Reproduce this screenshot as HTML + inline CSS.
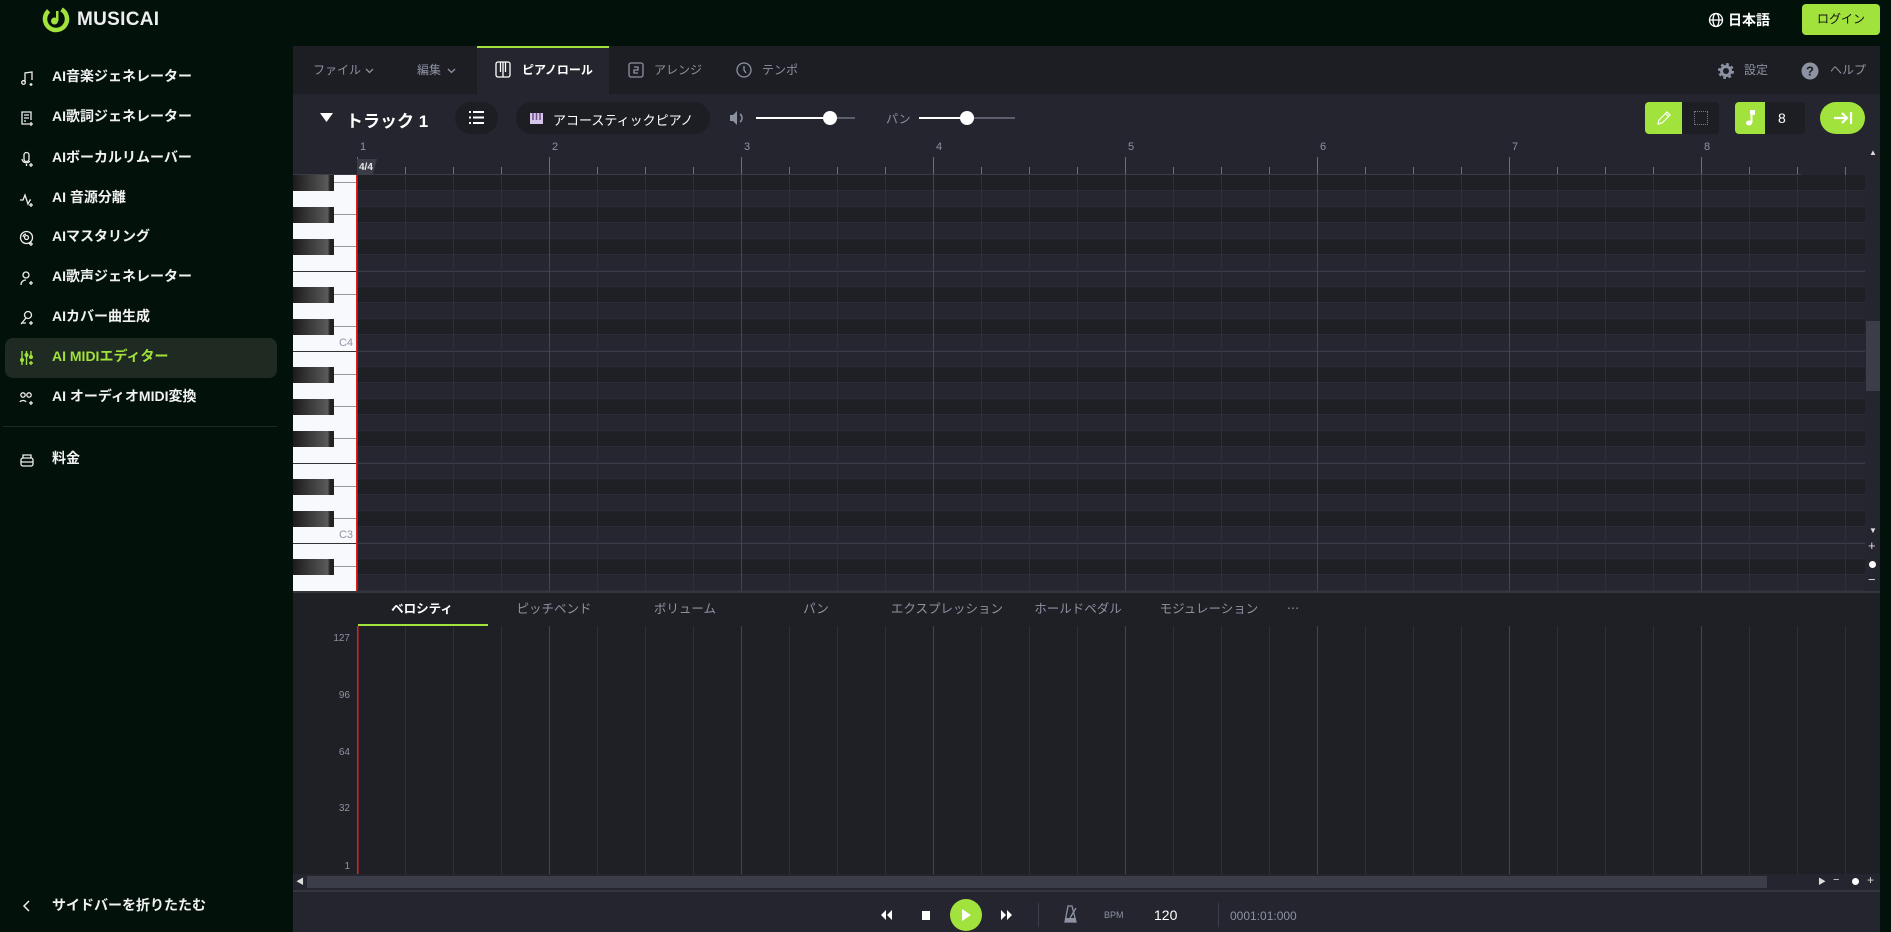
<!DOCTYPE html>
<html><head><meta charset="utf-8">
<style>
*{margin:0;padding:0;box-sizing:border-box}
body{width:1891px;height:932px;background:#03110b;font-family:"Liberation Sans","Noto Sans CJK JP",sans-serif;position:relative;overflow:hidden;color:#fff}
.a{position:absolute}
.side{font-size:14px;font-weight:bold;color:#f2f2f2}
.side div.t{position:absolute;left:52px;transform:translateY(-50%);white-space:nowrap}
.ic{position:absolute;left:19px;width:16px;height:16px;transform:translateY(-50%)}
.tab{position:absolute;top:46px;height:48px;line-height:48px;font-size:12px;color:#8d92a3}
.lt{position:absolute;top:593px;width:130px;text-align:center;font-size:12.5px;color:#8d92a3;line-height:32px}
.vl{position:absolute;right:1541px;font-size:10px;color:#8d92a3}
.rn{position:absolute;top:141px;font-size:11px;color:#8d92a3}
</style></head><body>
<!-- header -->
<svg class="a" style="left:42px;top:5px" width="28" height="28" viewBox="0 0 28 28"><circle cx="14" cy="14" r="11" fill="none" stroke="#a2e23c" stroke-width="4.5" stroke-dasharray="55 14" transform="rotate(-60 14 14)"/><circle cx="12.5" cy="16" r="3.5" fill="#a2e23c"/><rect x="14" y="6" width="2.5" height="10" fill="#a2e23c"/></svg>
<div class="a" style="left:77px;top:9px;font-size:19px;font-weight:bold;color:#eee;letter-spacing:0.3px">MUSICAI</div>
<svg class="a" style="left:1708px;top:12px" width="16" height="16" viewBox="0 0 16 16" fill="none" stroke="#fff" stroke-width="1.3"><circle cx="8" cy="8" r="6.5"/><ellipse cx="8" cy="8" rx="3" ry="6.5"/><path d="M1.5 8h13"/></svg>
<div class="a" style="left:1728px;top:10px;font-size:14px;font-weight:bold">日本語</div>
<div class="a" style="left:1802px;top:4px;width:78px;height:31px;background:#a2e23c;border-radius:4px;color:#111;font-size:12px;text-align:center;line-height:31px">ログイン</div>

<!-- sidebar -->
<div class="a" style="left:5px;top:338px;width:272px;height:40px;background:#1f2a23;border-radius:8px"></div>
<div class="a" style="left:3px;top:426px;width:274px;height:1px;background:#1e2a23"></div>
<div class="side">
<svg class="ic" style="top:78px" viewBox="0 0 16 16" fill="none" stroke="#eee" stroke-width="1.3"><path d="M6 12V3l7-1v8"/><circle cx="4.5" cy="12.5" r="1.8"/><path d="M12 13v3M10.5 14.5h3"/></svg><div class="t" style="top:76px">AI音楽ジェネレーター</div>
<svg class="ic" style="top:118px" viewBox="0 0 16 16" fill="none" stroke="#eee" stroke-width="1.3"><path d="M10 14H3V2h9v8M5 5h5M5 8h5M5 11h2"/><path d="M12 12v4M10 14h4"/></svg><div class="t" style="top:116px">AI歌詞ジェネレーター</div>
<svg class="ic" style="top:159px" viewBox="0 0 16 16" fill="none" stroke="#eee" stroke-width="1.3"><rect x="5" y="1.5" width="5" height="9" rx="2.5"/><path d="M3 8a4.5 4.5 0 0 0 8 2M7.5 13v2"/><path d="M12 12v4M10 14h4"/></svg><div class="t" style="top:157px">AIボーカルリムーバー</div>
<svg class="ic" style="top:199px" viewBox="0 0 16 16" fill="none" stroke="#eee" stroke-width="1.3"><path d="M1 9h3l2-5 3 9 2-4h1"/><path d="M12 12v4M10 14h4"/></svg><div class="t" style="top:197px">AI 音源分離</div>
<svg class="ic" style="top:238px" viewBox="0 0 16 16" fill="none" stroke="#eee" stroke-width="1.3"><circle cx="7.5" cy="7.5" r="6"/><circle cx="7.5" cy="7.5" r="2"/><path d="M4 7a3.5 3.5 0 0 1 3-3"/><path d="M12 12v4M10 14h4"/></svg><div class="t" style="top:236px">AIマスタリング</div>
<svg class="ic" style="top:278px" viewBox="0 0 16 16" fill="none" stroke="#eee" stroke-width="1.3"><circle cx="7" cy="5" r="3"/><path d="M2 15c0-3 2-5 5-5"/><path d="M12 11v4M10 13h4"/></svg><div class="t" style="top:276px">AI歌声ジェネレーター</div>
<svg class="ic" style="top:318px" viewBox="0 0 16 16" fill="none" stroke="#eee" stroke-width="1.3"><circle cx="9" cy="5" r="3.5"/><path d="M7 8l-5 6M3 13h4"/><path d="M12 11v4M10 13h4"/></svg><div class="t" style="top:316px">AIカバー曲生成</div>
<svg class="ic" style="top:358px" viewBox="0 0 16 16" fill="none" stroke="#a2e23c" stroke-width="1.4"><path d="M3 1v14M7.5 1v14M12 1v8"/><circle cx="3" cy="10" r="1.3" fill="#a2e23c"/><circle cx="7.5" cy="5" r="1.3" fill="#a2e23c"/><circle cx="12" cy="7" r="1.3" fill="#a2e23c"/><path d="M12 11v4M10 13h4"/></svg><div class="t" style="top:356px;color:#a2e23c">AI MIDIエディター</div>
<svg class="ic" style="top:398px" viewBox="0 0 16 16" fill="none" stroke="#eee" stroke-width="1.3"><circle cx="4" cy="5" r="2.2"/><circle cx="10" cy="5" r="2.2"/><path d="M1 12c1-2 5-2 6 0"/><path d="M12 11v4M10 13h4"/></svg><div class="t" style="top:396px">AI オーディオMIDI変換</div>
<svg class="ic" style="top:460px" viewBox="0 0 16 16" fill="none" stroke="#eee" stroke-width="1.3"><rect x="2" y="6" width="12" height="8" rx="2"/><path d="M4 6V3h8v3M2 10h12"/></svg><div class="t" style="top:458px">料金</div>
<svg class="ic" style="top:906px" viewBox="0 0 16 16" fill="none" stroke="#eee" stroke-width="1.5"><path d="M10 3L5 8l5 5"/></svg><div class="t" style="top:905px">サイドバーを折りたたむ</div>
</div>

<!-- main panel -->
<div class="a" style="left:293px;top:46px;width:1587px;height:48px;background:#1d1e23"></div>
<div class="a" style="left:477px;top:46px;width:132px;height:48px;background:#24252e;border-top:2px solid #a2e23c"></div>
<div class="tab" style="left:313px">ファイル</div>
<svg class="a" style="left:365px;top:68px" width="9" height="6" fill="none" stroke="#8d92a3" stroke-width="1.3"><path d="M1 1l3.5 3.5L8 1"/></svg>
<div class="tab" style="left:417px">編集</div>
<svg class="a" style="left:447px;top:68px" width="9" height="6" fill="none" stroke="#8d92a3" stroke-width="1.3"><path d="M1 1l3.5 3.5L8 1"/></svg>
<svg class="a" style="left:495px;top:61px" width="16" height="17" viewBox="0 0 16 17" fill="none" stroke="#fff" stroke-width="1.3"><rect x="1" y="1" width="14" height="15" rx="2"/><path d="M5.5 1v10M10.5 1v10M8 1v15"/></svg>
<div class="tab" style="left:522px;color:#fff;font-weight:bold">ピアノロール</div>
<svg class="a" style="left:628px;top:62px" width="16" height="16" viewBox="0 0 16 16" fill="none" stroke="#8d92a3" stroke-width="1.3"><rect x="1" y="1" width="14" height="14" rx="2"/><path d="M6 5h4v3H6v3h4"/></svg>
<div class="tab" style="left:654px">アレンジ</div>
<svg class="a" style="left:736px;top:62px" width="16" height="16" viewBox="0 0 16 16" fill="none" stroke="#8d92a3" stroke-width="1.3"><circle cx="8" cy="8" r="7"/><path d="M8 4v4l2 3"/></svg>
<div class="tab" style="left:762px">テンポ</div>
<svg class="a" style="left:1717px;top:62px" width="18" height="18" viewBox="0 0 18 18"><circle cx="9" cy="9" r="6" fill="none" stroke="#8d92a3" stroke-width="4" stroke-dasharray="2.4 2.3"/><circle cx="9" cy="9" r="4.5" fill="none" stroke="#8d92a3" stroke-width="3"/></svg>
<div class="tab" style="left:1744px">設定</div>
<svg class="a" style="left:1801px;top:62px" width="18" height="18" viewBox="0 0 18 18"><circle cx="9" cy="9" r="8.5" fill="#8d92a3"/><text x="9" y="13.5" font-size="13" font-weight="bold" text-anchor="middle" fill="#1d1e23" font-family="Liberation Sans">?</text></svg>
<div class="tab" style="left:1830px">ヘルプ</div>

<!-- toolbar -->
<div class="a" style="left:293px;top:94px;width:1587px;height:48px;background:#24252e"></div>
<svg class="a" style="left:320px;top:113px" width="13" height="9"><path d="M0 0h13L6.5 9z" fill="#fff"/></svg>
<div class="a" style="left:346px;top:107px;font-size:17px;font-weight:bold">トラック 1</div>
<div class="a" style="left:455px;top:102px;width:43px;height:32px;border-radius:16px;background:#1d1e23"></div>
<svg class="a" style="left:469px;top:111px" width="15" height="13" fill="#fff"><rect x="0" y="0" width="2" height="2"/><rect x="4" y="0" width="11" height="2"/><rect x="0" y="5.5" width="2" height="2"/><rect x="4" y="5.5" width="11" height="2"/><rect x="0" y="11" width="2" height="2"/><rect x="4" y="11" width="11" height="2"/></svg>
<div class="a" style="left:516px;top:102px;width:194px;height:32px;border-radius:16px;background:#1d1e23"></div>
<svg class="a" style="left:530px;top:113px" width="13" height="11"><rect width="13" height="11" fill="#d8c6e8"/><path d="M3 0v7M6.5 0v7M10 0v7" stroke="#6b4f88" stroke-width="1.5"/></svg>
<div class="a" style="left:553px;top:110px;font-size:13px;color:#fff">アコースティックピアノ</div>
<svg class="a" style="left:729px;top:110px" width="16" height="16" viewBox="0 0 16 16"><path d="M1 5h3l4-4v14l-4-4H1z" fill="#8d92a3"/><path d="M11 4a5 5 0 0 1 0 8" fill="none" stroke="#8d92a3" stroke-width="1.5"/></svg>
<div class="a" style="left:756px;top:117px;width:99px;height:2px;background:#5a5e6d"></div>
<div class="a" style="left:756px;top:117px;width:74px;height:2px;background:#fff"></div>
<div class="a" style="left:823px;top:111px;width:14px;height:14px;border-radius:7px;background:#fff"></div>
<div class="a" style="left:886px;top:110px;font-size:12px;color:#8d92a3">パン</div>
<div class="a" style="left:919px;top:117px;width:96px;height:2px;background:#5a5e6d"></div>
<div class="a" style="left:919px;top:117px;width:48px;height:2px;background:#fff"></div>
<div class="a" style="left:960px;top:111px;width:14px;height:14px;border-radius:7px;background:#fff"></div>
<div class="a" style="left:1645px;top:102px;width:74px;height:32px;border-radius:4px;background:#1d1e23;overflow:hidden"><div style="width:37px;height:32px;background:#a2e23c"></div></div>
<svg class="a" style="left:1656px;top:110px" width="16" height="16" viewBox="0 0 16 16" fill="none" stroke="#fff" stroke-width="1.2"><path d="M2 14l1-4 8-8 3 3-8 8z M9.5 3.5l3 3"/></svg>
<div class="a" style="left:1694px;top:111px;width:14px;height:14px;border:1.5px dotted #7a7e8c"></div>
<div class="a" style="left:1735px;top:102px;width:70px;height:32px;border-radius:4px;background:#1d1e23;overflow:hidden"><div style="width:30px;height:32px;background:#a2e23c"></div></div>
<svg class="a" style="left:1742px;top:109px" width="16" height="18" viewBox="0 0 16 18"><path d="M8 2h4v3H9.5v9" stroke="#fff" stroke-width="2" fill="none"/><ellipse cx="7" cy="14" rx="3" ry="2.5" fill="#fff"/><rect x="8" y="1" width="5" height="4" fill="#fff"/></svg>
<div class="a" style="left:1778px;top:110px;font-size:14px;color:#fff">8</div>
<div class="a" style="left:1820px;top:102px;width:45px;height:32px;border-radius:16px;background:#a2e23c"></div>
<svg class="a" style="left:1833px;top:111px" width="20" height="14" viewBox="0 0 20 14" fill="none" stroke="#fff" stroke-width="2.2"><path d="M1 7h13M9 2l5 5-5 5M18 1v12"/></svg>

<!-- ruler -->
<div class="a" style="left:293px;top:142px;width:1587px;height:33px;background:#24252e"></div>
<svg class="a" style="left:293px;top:142px" width="1572" height="33">
<defs><pattern id="rt" x="64" y="0" width="48" height="33" patternUnits="userSpaceOnUse"><rect x="0" y="25" width="1" height="8" fill="#6b6f7d"/></pattern>
<pattern id="rm" x="64" y="0" width="192" height="33" patternUnits="userSpaceOnUse"><rect x="0" y="15" width="1" height="18" fill="#6b6f7d"/></pattern></defs>
<rect x="64" y="0" width="1508" height="33" fill="url(#rt)"/><rect x="64" y="0" width="1508" height="33" fill="url(#rm)"/>
<rect x="0" y="32" width="1508" height="1" fill="#3a3c47"/>
<path d="M64 17h20l-4 15H64z" fill="#3a3c47"/><text x="66" y="28" font-size="10" font-weight="bold" fill="#e8e8e8" font-family="Liberation Sans">4/4</text>
</svg>
<div class="rn" style="left:360px">1</div><div class="rn" style="left:552px">2</div><div class="rn" style="left:744px">3</div><div class="rn" style="left:936px">4</div><div class="rn" style="left:1128px">5</div><div class="rn" style="left:1320px">6</div><div class="rn" style="left:1512px">7</div><div class="rn" style="left:1704px">8</div>

<!-- grid -->
<svg class="a" style="left:357px;top:175px" width="1508" height="416">
<defs>
<pattern id="rows" x="0" y="0" width="1508" height="192" patternUnits="userSpaceOnUse">
<rect width="1508" height="192" fill="#25262f"/>
<g fill="#1f2026"><rect y="0" width="1508" height="16"/><rect y="32" width="1508" height="16"/><rect y="64" width="1508" height="16"/><rect y="112" width="1508" height="16"/><rect y="144" width="1508" height="16"/></g>
</pattern>
<pattern id="rl" x="0" y="0" width="1508" height="16" patternUnits="userSpaceOnUse"><rect y="15" width="1508" height="1" fill="#2b2c35"/></pattern>
<pattern id="oct" x="0" y="0" width="1508" height="192" patternUnits="userSpaceOnUse"><rect y="96" width="1508" height="1" fill="#3a3c47"/><rect y="176" width="1508" height="1" fill="#3a3c47"/></pattern>
<pattern id="beat" x="0" y="0" width="48" height="416" patternUnits="userSpaceOnUse"><rect width="1" height="416" fill="#2e2f38"/></pattern>
<pattern id="meas" x="0" y="0" width="192" height="416" patternUnits="userSpaceOnUse"><rect width="1" height="416" fill="#42444f"/></pattern>
</defs>
<rect width="1508" height="416" fill="url(#rows)"/>
<rect width="1508" height="416" fill="url(#rl)"/>
<rect width="1508" height="416" fill="url(#oct)"/>
<rect width="1508" height="416" fill="url(#beat)"/>
<rect width="1508" height="416" fill="url(#meas)"/>
</svg>
<!-- piano -->
<svg class="a" style="left:293px;top:175px" width="64" height="416">
<defs><linearGradient id="bk" x1="0" x2="1"><stop offset="0" stop-color="#1c1c1c"/><stop offset="0.85" stop-color="#5a5a5a"/><stop offset="0.9" stop-color="#222"/></linearGradient></defs>
<rect width="63" height="416" fill="#f8f9fd"/>
<g fill="url(#bk)"><rect y="0" width="41" height="16"/><rect y="32" width="41" height="16"/><rect y="64" width="41" height="16"/><rect y="112" width="41" height="16"/><rect y="144" width="41" height="16"/><rect y="192" width="41" height="16"/><rect y="224" width="41" height="16"/><rect y="256" width="41" height="16"/><rect y="304" width="41" height="16"/><rect y="336" width="41" height="16"/><rect y="384" width="41" height="16"/></g>
<g fill="#999"><rect x="41" y="7" width="22" height="1"/><rect x="41" y="39" width="22" height="1"/><rect x="41" y="71" width="22" height="1"/><rect x="41" y="119" width="22" height="1"/><rect x="41" y="151" width="22" height="1"/><rect x="41" y="199" width="22" height="1"/><rect x="41" y="231" width="22" height="1"/><rect x="41" y="263" width="22" height="1"/><rect x="41" y="311" width="22" height="1"/><rect x="41" y="343" width="22" height="1"/><rect x="41" y="391" width="22" height="1"/></g>
<g fill="#333"><rect y="96" width="63" height="1"/><rect y="176" width="63" height="1"/><rect y="288" width="63" height="1"/><rect y="368" width="63" height="1"/></g>
<text x="60" y="171" font-size="11" fill="#8d92a3" text-anchor="end" font-family="Liberation Sans">C4</text>
<text x="60" y="363" font-size="11" fill="#8d92a3" text-anchor="end" font-family="Liberation Sans">C3</text>
<rect x="63" width="1.5" height="416" fill="#e02020"/>
</svg>
<!-- vscroll -->
<div class="a" style="left:1865px;top:142px;width:15px;height:450px;background:#24252e"></div>
<div class="a" style="left:1866px;top:321px;width:14px;height:70px;background:#3b3d48"></div>
<div class="a" style="left:1869px;top:148px;font-size:8px;color:#ddd">▲</div>
<div class="a" style="left:1869px;top:526px;font-size:8px;color:#ddd">▼</div>
<div class="a" style="left:1868px;top:538px;font-size:13px;color:#ddd">+</div>
<div class="a" style="left:1869px;top:561px;width:7px;height:7px;border-radius:4px;background:#fff"></div>
<div class="a" style="left:1868px;top:572px;font-size:13px;color:#ddd">−</div>
<div class="a" style="left:293px;top:591px;width:1587px;height:2px;background:#34363f"></div>

<!-- lower -->
<div class="a" style="left:293px;top:593px;width:1587px;height:281px;background:#1f2026"></div>
<div class="lt" style="left:357px;color:#fff;font-weight:bold">ベロシティ</div>
<div class="a" style="left:358px;top:624px;width:130px;height:2px;background:#a2e23c"></div>
<div class="lt" style="left:489px">ピッチベンド</div>
<div class="lt" style="left:620px">ボリューム</div>
<div class="lt" style="left:751px">パン</div>
<div class="lt" style="left:882px">エクスプレッション</div>
<div class="lt" style="left:1013px">ホールドペダル</div>
<div class="lt" style="left:1144px">モジュレーション</div>
<div class="lt" style="left:1228px">⋯</div>
<svg class="a" style="left:357px;top:626px" width="1508" height="248">
<rect width="1508" height="248" fill="url(#beat)"/>
<rect width="1508" height="248" fill="url(#meas)"/>
<rect width="1.5" height="248" fill="#e02020"/>
</svg>
<div class="vl" style="top:633px">127</div><div class="vl" style="top:690px">96</div><div class="vl" style="top:747px">64</div><div class="vl" style="top:803px">32</div><div class="vl" style="top:861px">1</div>
<!-- hscroll -->
<div class="a" style="left:293px;top:874px;width:1587px;height:16px;background:#24252e"></div>
<div class="a" style="left:307px;top:876px;width:1460px;height:12px;background:#3b3d48"></div>
<div class="a" style="left:296px;top:876px;font-size:8px;color:#ddd">◀</div>
<div class="a" style="left:1818px;top:876px;font-size:8px;color:#ddd">▶</div>
<div class="a" style="left:1833px;top:874px;font-size:11px;color:#ddd">−</div>
<div class="a" style="left:1852px;top:878px;width:7px;height:7px;border-radius:4px;background:#fff"></div>
<div class="a" style="left:1867px;top:873px;font-size:12px;color:#ddd">+</div>
<div class="a" style="left:293px;top:890px;width:1587px;height:2px;background:#34363f"></div>
<!-- transport -->
<div class="a" style="left:293px;top:892px;width:1587px;height:40px;background:#24252e"></div>
<svg class="a" style="left:879px;top:910px" width="14" height="10"><path d="M7 0v10L2 5zM13 0v10L8 5z" fill="#fff"/></svg>
<div class="a" style="left:922px;top:911px;width:8px;height:9px;background:#fff"></div>
<div class="a" style="left:950px;top:899px;width:32px;height:32px;border-radius:16px;background:#a2e23c"></div>
<svg class="a" style="left:962px;top:909px" width="10" height="12"><path d="M0 0l9 6-9 6z" fill="#fff"/></svg>
<svg class="a" style="left:1000px;top:910px" width="14" height="10"><path d="M1 0v10l5-5zM7 0v10l5-5z" fill="#fff"/></svg>
<div class="a" style="left:1038px;top:903px;width:1px;height:24px;background:#3a3c47"></div>
<svg class="a" style="left:1064px;top:905px" width="14" height="18" viewBox="0 0 14 18"><path d="M4 1h4l4 16H1z" fill="none" stroke="#8d92a3" stroke-width="1.3"/><path d="M6 13L12 3" stroke="#8d92a3" stroke-width="1.3"/><rect x="1" y="13" width="11" height="4" fill="#8d92a3"/></svg>
<div class="a" style="left:1104px;top:910px;font-size:9px;color:#8d92a3">BPM</div>
<div class="a" style="left:1154px;top:907px;font-size:14px;color:#fff">120</div>
<div class="a" style="left:1218px;top:903px;width:1px;height:24px;background:#3a3c47"></div>
<div class="a" style="left:1230px;top:909px;font-size:12px;color:#8d92a3">0001:01:000</div>
</body></html>
